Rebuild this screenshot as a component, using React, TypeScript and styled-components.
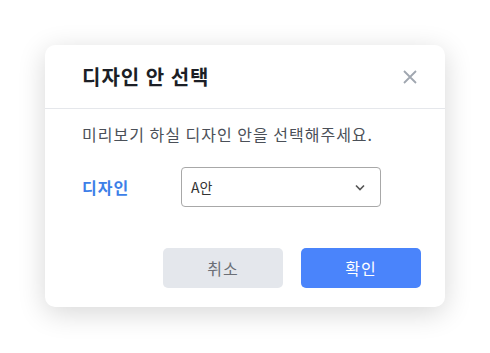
import styled, { createGlobalStyle } from "styled-components";

const GlobalStyle = createGlobalStyle`
  html, body {
    margin: 0;
    padding: 0;
    background: #ffffff;
    font-family: "Noto Sans CJK KR", "Noto Sans", sans-serif;
  }
`;

const Backdrop = styled.div`
  width: 490px;
  height: 353px;
  padding: 45px;
  box-sizing: border-box;
`;

const Dialog = styled.div`
  width: 400px;
  height: 262px;
  background: #ffffff;
  border-radius: 10px;
  box-shadow: 0 6px 28px rgba(0, 0, 0, 0.16);
  display: flex;
  flex-direction: column;
`;

const DialogHeader = styled.div`
  height: 63px;
  display: flex;
  align-items: center;
  justify-content: space-between;
  padding: 0 25px 0 37px;
  border-bottom: 1px solid #e5e7eb;
`;

const Title = styled.h2`
  margin: 0;
  font-size: 20px;
  letter-spacing: 1px;
  font-weight: 700;
  color: #1c1f26;
`;

const CloseButton = styled.button`
  border: 0;
  background: none;
  padding: 0;
  width: 20px;
  height: 20px;
  display: flex;
  align-items: center;
  justify-content: center;
`;

const DialogBody = styled.div`
  flex: 1;
  padding: 14px 24px 0 37px;
  display: flex;
  flex-direction: column;
`;

const Message = styled.p`
  margin: 0;
  font-size: 16px;
  letter-spacing: 1px;
  line-height: 22px;
  color: #4b5058;
`;

const FieldRow = styled.div`
  margin-top: 22px;
  display: flex;
  align-items: center;
`;

const FieldLabel = styled.label`
  width: 99px;
  font-size: 16px;
  letter-spacing: 1px;
  font-weight: 700;
  color: #3d7fe8;
`;

const Select = styled.div`
  width: 200px;
  height: 40px;
  box-sizing: border-box;
  border: 1px solid #a8a8a8;
  border-radius: 4px;
  display: flex;
  align-items: center;
  justify-content: space-between;
  padding: 0 15px 0 9px;
  font-size: 14px;
  color: #333;
`;

const Footer = styled.div`
  display: flex;
  justify-content: flex-end;
  gap: 18px;
  padding: 0 24px 19px 0;
`;

const Button = styled.button<{ $primary?: boolean }>`
  width: 120px;
  height: 40px;
  border: 0;
  border-radius: 5px;
  font-family: inherit;
  font-size: 16px;
  letter-spacing: 1px;
  background: ${({ $primary }) => ($primary ? "#4a84fb" : "#e4e7ec")};
  color: ${({ $primary }) => ($primary ? "#ffffff" : "#6b6f76")};
`;

export default function App() {
  return (
    <>
      <GlobalStyle />
      <Backdrop>
        <Dialog>
          <DialogHeader>
            <Title>디자인 안 선택</Title>
            <CloseButton aria-label="닫기">
              <svg width="14" height="14" viewBox="0 0 14 14">
                <path d="M1 1L13 13M13 1L1 13" stroke="#a0a7b0" strokeWidth="1.8" />
              </svg>
            </CloseButton>
          </DialogHeader>
          <DialogBody>
            <Message>미리보기 하실 디자인 안을 선택해주세요.</Message>
            <FieldRow>
              <FieldLabel>디자인</FieldLabel>
              <Select>
                <span>A안</span>
                <svg width="10" height="7" viewBox="0 0 10 7">
                  <path d="M1 1.5L5 5.5L9 1.5" fill="none" stroke="#555" strokeWidth="1.6" />
                </svg>
              </Select>
            </FieldRow>
          </DialogBody>
          <Footer>
            <Button>취소</Button>
            <Button $primary>확인</Button>
          </Footer>
        </Dialog>
      </Backdrop>
    </>
  );
}
